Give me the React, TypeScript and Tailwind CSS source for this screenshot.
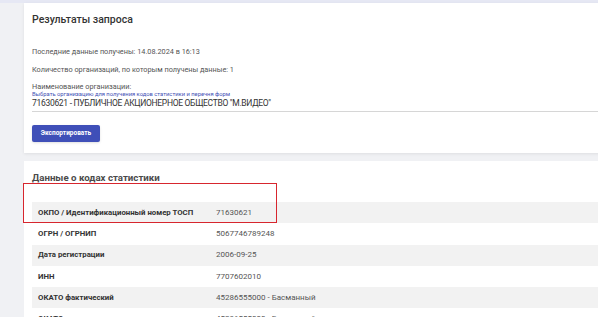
const rows = [
  ["ОКПО / Идентификационный номер ТОСП", "71630621"],
  ["ОГРН / ОГРНИП", "5067746789248"],
  ["Дата регистрации", "2006-09-25"],
  ["ИНН", "7707602010"],
  ["ОКАТО фактический", "45286555000 - Басманный"],
  ["ОКАТО регистрации", "45286555000 - Басманный"],
];

export default function App() {
  return (
    <div className="w-[598px] h-[317px] overflow-hidden bg-[#f0f1f4] font-['Roboto',sans-serif]">
      <div className="h-[3px] bg-[#e6e8f4]" />
      <div className="ml-6 -mr-8 flex flex-col gap-2">
        <section className="bg-white shadow-[0_1px_3px_rgba(0,0,0,0.08)] pl-2 pt-[11px] h-[150px]">
          <h2 className="text-[10.5px] font-medium text-[#333] leading-3">Результаты запроса</h2>
          <p className="mt-[21px] text-[7.3px] text-[#555] leading-[10px]">Последние данные получены: 14.08.2024 в 16:13</p>
          <p className="mt-[8px] text-[7.3px] text-[#555] leading-[10px]">Количество организаций, по которым получены данные: 1</p>
          <p className="mt-[8px] text-[7.3px] text-[#555] leading-[8px]">Наименование организации:</p>
          <p className="text-[5.8px] text-[#3f51b5] leading-[7px]">Выбрать организацию для получения кодов статистики и перечня форм</p>
          <div className="border-b border-[#d6d6d6] pb-[3px] text-[8.5px] tracking-[-0.3px] text-[#333] leading-[10px]">
            71630621 - ПУБЛИЧНОЕ АКЦИОНЕРНОЕ ОБЩЕСТВО "М.ВИДЕО"
          </div>
          <button className="mt-[13px] h-[17px] w-[68px] rounded-[2px] bg-[#3f4fb8] text-[6.5px] font-bold text-white shadow-sm">
            Экспортировать
          </button>
        </section>
        <section className="relative bg-white pl-2 pt-[11px]">
          <h2 className="text-[9.7px] font-bold text-[#4a4a4a] leading-3">Данные о кодах статистики</h2>
          <div className="mt-[18px] flex flex-col">
            {rows.map(([label, value], i) => (
              <div key={label} className={`flex h-[21.3px] items-center ${i % 2 === 0 ? "bg-[#f2f2f2]" : "bg-white"}`}>
                <div className="w-[184px] pl-[6px] text-[7.8px] font-bold text-[#333]">{label}</div>
                <div className="text-[8px] text-[#555]">{value}</div>
              </div>
            ))}
          </div>
          <div className="absolute left-[-1px] top-[22px] h-[40px] w-[254px] border-[1.5px] border-[#d7262e]" />
        </section>
      </div>
    </div>
  );
}
